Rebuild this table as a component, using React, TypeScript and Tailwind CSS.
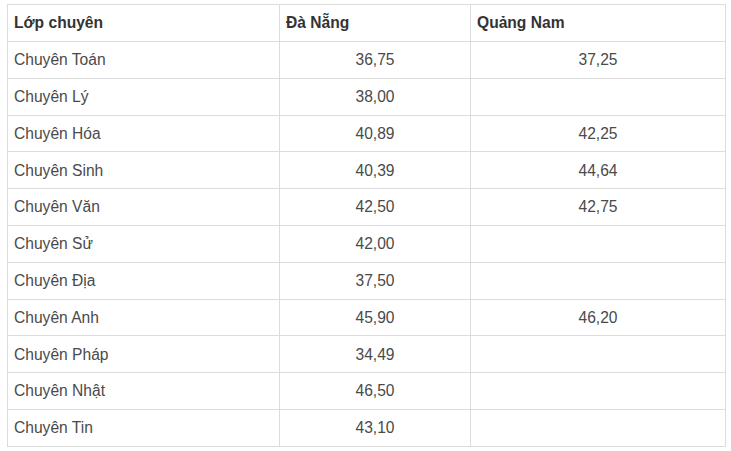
import React from "react";

type Row = { name: string; dn: string; qn: string };

const rows: Row[] = [
  { name: "Chuyên Toán", dn: "36,75", qn: "37,25" },
  { name: "Chuyên Lý", dn: "38,00", qn: "" },
  { name: "Chuyên Hóa", dn: "40,89", qn: "42,25" },
  { name: "Chuyên Sinh", dn: "40,39", qn: "44,64" },
  { name: "Chuyên Văn", dn: "42,50", qn: "42,75" },
  { name: "Chuyên Sử", dn: "42,00", qn: "" },
  { name: "Chuyên Địa", dn: "37,50", qn: "" },
  { name: "Chuyên Anh", dn: "45,90", qn: "46,20" },
  { name: "Chuyên Pháp", dn: "34,49", qn: "" },
  { name: "Chuyên Nhật", dn: "46,50", qn: "" },
  { name: "Chuyên Tin", dn: "43,10", qn: "" },
];

export default function App() {
  return (
    <div className="w-[731px] h-[451px] bg-white pt-[4px] pl-[7px] font-['Liberation_Sans',Arial,sans-serif] text-[15.6px]">
      <table className="border-collapse table-fixed w-[718px]">
        <colgroup>
          <col className="w-[272px]" />
          <col className="w-[191px]" />
          <col className="w-[255px]" />
        </colgroup>
        <thead>
          <tr className="h-[37px]">
            <th className="border border-[#dcdcdc] px-[6px] text-left font-bold text-[#333]">Lớp chuyên</th>
            <th className="border border-[#dcdcdc] px-[6px] text-left font-bold text-[#333]">Đà Nẵng</th>
            <th className="border border-[#dcdcdc] px-[6px] text-left font-bold text-[#333]">Quảng Nam</th>
          </tr>
        </thead>
        <tbody>
          {rows.map(r => (
            <tr key={r.name} className="h-[36.8px]">
              <td className="border border-[#dcdcdc] px-[6px] text-[#4a4a4a]">{r.name}</td>
              <td className="border border-[#dcdcdc] px-[6px] text-center text-[#4a4a4a]">{r.dn}</td>
              <td className="border border-[#dcdcdc] px-[6px] text-center text-[#4a4a4a]">{r.qn}</td>
            </tr>
          ))}
        </tbody>
      </table>
    </div>
  );
}
